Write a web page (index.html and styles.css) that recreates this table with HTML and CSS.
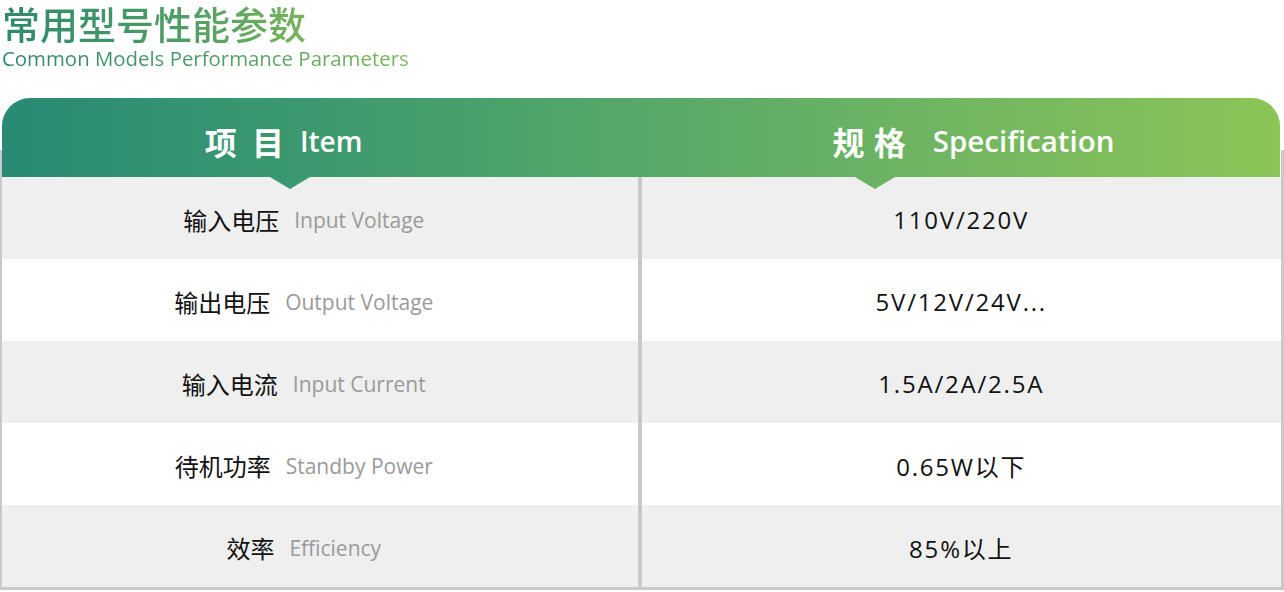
FILE: index.html
```html
<!DOCTYPE html>
<html lang="zh">
<head>
<meta charset="utf-8">
<title>常用型号性能参数</title>
<link rel="stylesheet" href="styles.css">
</head>
<body>
<header class="heading">
  <h1 class="title">常用型号性能参数</h1>
  <p class="subtitle">Common Models Performance Parameters</p>
</header>
<section class="table">
  <div class="thead">
    <div class="th th-item"><span class="zh">项 目</span><span class="en">Item</span></div>
    <div class="th th-spec"><span class="zh">规 格</span><span class="en">Specification</span></div>
  </div>
  <div class="tbody">
    <div class="row alt">
      <div class="cell name"><span class="zh">输入电压</span><span class="en">Input Voltage</span></div>
      <div class="cell value">110V/220V</div>
    </div>
    <div class="row">
      <div class="cell name"><span class="zh">输出电压</span><span class="en">Output Voltage</span></div>
      <div class="cell value">5V/12V/24V...</div>
    </div>
    <div class="row alt">
      <div class="cell name"><span class="zh">输入电流</span><span class="en">Input Current</span></div>
      <div class="cell value">1.5A/2A/2.5A</div>
    </div>
    <div class="row">
      <div class="cell name"><span class="zh">待机功率</span><span class="en">Standby Power</span></div>
      <div class="cell value">0.65W以下</div>
    </div>
    <div class="row alt">
      <div class="cell name"><span class="zh">效率</span><span class="en">Efficiency</span></div>
      <div class="cell value">85%以上</div>
    </div>
  </div>
</section>
</body>
</html>
```
FILE: styles.css
```css
html, body {
  margin: 0;
  padding: 0;
  background: #ffffff;
}
body {
  width: 1284px;
  font-family: "Open Sans", "Noto Sans CJK SC", sans-serif;
  color: #111;
}
.heading {
  padding-left: 2px;
  height: 98px;
}
.title {
  margin: 0;
  font-family: "Noto Sans CJK SC", sans-serif;
  font-weight: 500;
  font-size: 38px;
  line-height: 46px;
  display: block;
  width: fit-content;
  background: linear-gradient(90deg, #2e8a6c 0%, #4c9c66 55%, #78b45c 100%);
  -webkit-background-clip: text;
  background-clip: text;
  color: transparent;
}
.subtitle {
  margin: 0;
  font-size: 20.4px;
  font-weight: 400;
  line-height: 24px;
  display: block;
  width: fit-content;
  background: linear-gradient(90deg, #2a876e 0%, #4f9d66 55%, #7db65a 100%);
  -webkit-background-clip: text;
  background-clip: text;
  color: transparent;
}
.table {
  width: 1284px;
}
.thead {
  position: relative;
  z-index: 1;
  margin: 0 4px 0 2px;
  height: 91px;
  display: grid;
  grid-template-columns: 1fr 1fr;
  border-radius: 28px 28px 0 0;
  background: linear-gradient(90deg, #288a75 0%, #45a06c 35%, #6db363 70%, #8bc556 100%);
  clip-path: polygon(0 0, 100% 0, 100% 79px, 893px 79px, 873px 91px, 853px 79px, 308px 79px, 288px 91px, 268px 79px, 0 79px);
  color: #ffffff;
}
.th {
  height: 79px;
  box-sizing: border-box;
  padding-top: 6px;
  display: flex;
  align-items: center;
  justify-content: center;
}
.th-item {
  padding-right: 76px;
}
.th-spec {
  padding-left: 26px;
}
.th .zh {
  font-family: "Noto Sans CJK SC", sans-serif;
  font-weight: 700;
  font-size: 32px;
  letter-spacing: 4px;
  margin-right: 12px;
}
.th-spec .zh {
  letter-spacing: 1px;
  margin-right: 26px;
}
.th .en {
  font-weight: 600;
  font-size: 28px;
}
.th-spec .en {
  font-size: 29.5px;
}
.tbody {
  margin-top: -39px;
  padding-top: 27px;
  border-style: solid;
  border-color: #c9c9c9;
  border-width: 0 3px 3px 2px;
}
.row {
  height: 82px;
  display: grid;
  grid-template-columns: 1fr 1fr;
  background: #ffffff;
}
.row.alt {
  background: #eeefee;
}
.cell {
  display: flex;
  align-items: center;
  justify-content: center;
  padding-top: 3px;
}
.name {
  border-right: 4px solid #c9c9c9;
  padding-right: 32px;
}
.name .zh {
  font-family: "Noto Sans CJK SC", sans-serif;
  font-size: 24px;
  color: #111;
  margin-right: 15px;
}
.name .en {
  font-size: 21px;
  color: #9a9a9a;
}
.value {
  font-size: 24px;
  letter-spacing: 1.8px;
  color: #111;
}
```
